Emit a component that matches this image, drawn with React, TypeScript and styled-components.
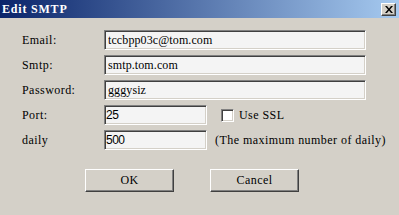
import React from 'react';
import styled, { createGlobalStyle } from 'styled-components';

const GlobalStyle = createGlobalStyle`
  html, body {
    margin: 0;
    padding: 0;
    background: #d4d0c8;
  }
`;

const SERIF = `'Liberation Serif', 'Times New Roman', serif`;

function App() {
  return (
    <>
      <GlobalStyle />
      <Dialog>
        <TitleBar>
          <Title>Edit SMTP</Title>
          <CloseButton aria-label="close">
            <svg width="8" height="7" viewBox="0 0 8 7">
              <path d="M0 0h2l2 2.5L6 0h2L5 3.5 8 7H6L4 4.5 2 7H0l3-3.5z" fill="#000" />
            </svg>
          </CloseButton>
        </TitleBar>
        <Form>
          <Label>Email:</Label>
          <Field value="tccbpp03c@tom.com" />
          <Label>Smtp:</Label>
          <Field value="smtp.tom.com" />
          <Label>Password:</Label>
          <Field value="gggysiz" />
          <Label>Port:</Label>
          <Inline>
            <Field value="25" $short $sans />
            <Check>
              <CheckBox />
              <span>Use SSL</span>
            </Check>
          </Inline>
          <Label>daily</Label>
          <Inline>
            <Field value="500" $short $sans />
            <Hint>(The maximum number of daily)</Hint>
          </Inline>
        </Form>
        <Buttons>
          <Button>OK</Button>
          <Button>Cancel</Button>
        </Buttons>
      </Dialog>
    </>
  );
}

export default App;

const Dialog = styled.div`
  width: 399px;
  height: 215px;
  background: #d4d0c8;
  overflow: hidden;
  font-family: ${SERIF};
  font-size: 12px;
  letter-spacing: 0.45px;
  color: #000;
`;

const TitleBar = styled.div`
  height: 18px;
  display: flex;
  align-items: center;
  justify-content: space-between;
  padding: 0 3px 0 2px;
  background: linear-gradient(to right, #0a246a, #a6caf0);
`;

const Title = styled.span`
  color: #fff;
  font-weight: bold;
  font-size: 12px;
  letter-spacing: 0.8px;
`;

const CloseButton = styled.div`
  width: 15px;
  height: 13px;
  box-sizing: border-box;
  display: flex;
  align-items: center;
  justify-content: center;
  background: #d4d0c8;
  border-top: 1px solid #fff;
  border-left: 1px solid #fff;
  border-right: 1px solid #404040;
  border-bottom: 1px solid #404040;
  box-shadow: inset -1px -1px 0 #808080;
`;

const Form = styled.div`
  display: grid;
  grid-template-columns: 82px 262px;
  grid-auto-rows: 20px;
  row-gap: 5px;
  align-items: center;
  padding: 12px 0 0 22px;
`;

const Label = styled.div`
  line-height: 20px;
`;

const Field = styled.input.attrs({ readOnly: true })<{ $short?: boolean; $sans?: boolean }>`
  box-sizing: border-box;
  width: ${(p) => (p.$short ? '103px' : '262px')};
  height: 20px;
  margin: 0;
  padding: 0 ${(p) => (p.$sans ? '1px' : '3px')};
  background: #f4f4f4;
  border-top: 1px solid #808080;
  border-left: 1px solid #808080;
  border-right: 1px solid #fff;
  border-bottom: 1px solid #fff;
  box-shadow: inset 1px 1px 0 #404040, inset -1px -1px 0 #d4d0c8;
  outline: none;
  color: #000;
  font-family: ${(p) => (p.$sans ? `'Liberation Sans', Arial, sans-serif` : SERIF)};
  font-size: 12px;
  letter-spacing: ${(p) => (p.$sans ? '-0.5px' : '0.1px')};
`;

const Inline = styled.div`
  display: flex;
  align-items: center;
`;

const Check = styled.label`
  display: flex;
  align-items: center;
  gap: 5px;
  margin-left: 14px;
`;

const CheckBox = styled.span`
  box-sizing: border-box;
  width: 13px;
  height: 13px;
  background: #fff;
  border-top: 1px solid #808080;
  border-left: 1px solid #808080;
  border-right: 1px solid #fff;
  border-bottom: 1px solid #fff;
  box-shadow: inset 1px 1px 0 #404040, inset -1px -1px 0 #d4d0c8;
`;

const Hint = styled.span`
  margin-left: 8px;
  white-space: nowrap;
`;

const Buttons = styled.div`
  display: flex;
  gap: 36px;
  padding: 19px 0 0 85px;
`;

const Button = styled.div`
  box-sizing: border-box;
  width: 89px;
  height: 23px;
  display: flex;
  align-items: center;
  justify-content: center;
  background: #d4d0c8;
  border-top: 1px solid #fff;
  border-left: 1px solid #fff;
  border-right: 1px solid #404040;
  border-bottom: 1px solid #404040;
  box-shadow: inset -1px -1px 0 #808080;
`;
